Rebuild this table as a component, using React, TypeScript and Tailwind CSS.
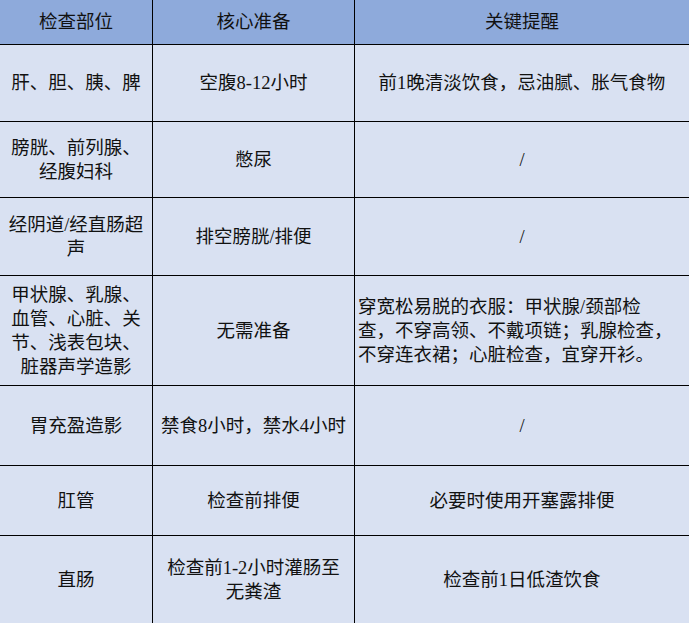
import React from "react";

const font = {
  fontFamily: '"Liberation Serif", "Noto Sans CJK SC", serif',
};

type Cell = { lines: string[]; left?: boolean };

const header = ["检查部位", "核心准备", "关键提醒"];

const rows: Cell[][] = [
  [{ lines: ["肝、胆、胰、脾"] }, { lines: ["空腹8-12小时"] }, { lines: ["前1晚清淡饮食，忌油腻、胀气食物"] }],
  [{ lines: ["膀胱、前列腺、", "经腹妇科"] }, { lines: ["憋尿"] }, { lines: ["/"] }],
  [{ lines: ["经阴道/经直肠超", "声"] }, { lines: ["排空膀胱/排便"] }, { lines: ["/"] }],
  [
    { lines: ["甲状腺、乳腺、", "血管、心脏、关", "节、浅表包块、", "脏器声学造影"] },
    { lines: ["无需准备"] },
    {
      lines: ["穿宽松易脱的衣服：甲状腺/颈部检", "查，不穿高领、不戴项链；乳腺检查，", "不穿连衣裙；心脏检查，宜穿开衫。"],
      left: true,
    },
  ],
  [{ lines: ["胃充盈造影"] }, { lines: ["禁食8小时，禁水4小时"] }, { lines: ["/"] }],
  [{ lines: ["肛管"] }, { lines: ["检查前排便"] }, { lines: ["必要时使用开塞露排便"] }],
  [{ lines: ["直肠"] }, { lines: ["检查前1-2小时灌肠至", "无粪渣"] }, { lines: ["检查前1日低渣饮食"] }],
];

export default function App() {
  return (
    <div
      className="grid w-[689px] h-[623px] grid-cols-[152px_201px_334px] grid-rows-[44px_76px_75px_77px_109px_79px_69px_87px] gap-px bg-black text-[18.5px] leading-[24px] text-[#111]"
      style={font}
    >
      {header.map((h) => (
        <div key={h} className="flex items-center justify-center bg-[#8eaadb]">
          {h}
        </div>
      ))}
      {rows.map((r, i) =>
        r.map((c, j) => (
          <div
            key={`${i}-${j}`}
            className={
              c.left
                ? "flex flex-col justify-center items-start bg-[#d9e1f2] pl-[3px] whitespace-nowrap"
                : "flex flex-col justify-center items-center text-center bg-[#d9e1f2] whitespace-nowrap"
            }
          >
            {c.lines.map((l, k) => (
              <span key={k}>{l}</span>
            ))}
          </div>
        ))
      )}
    </div>
  );
}
